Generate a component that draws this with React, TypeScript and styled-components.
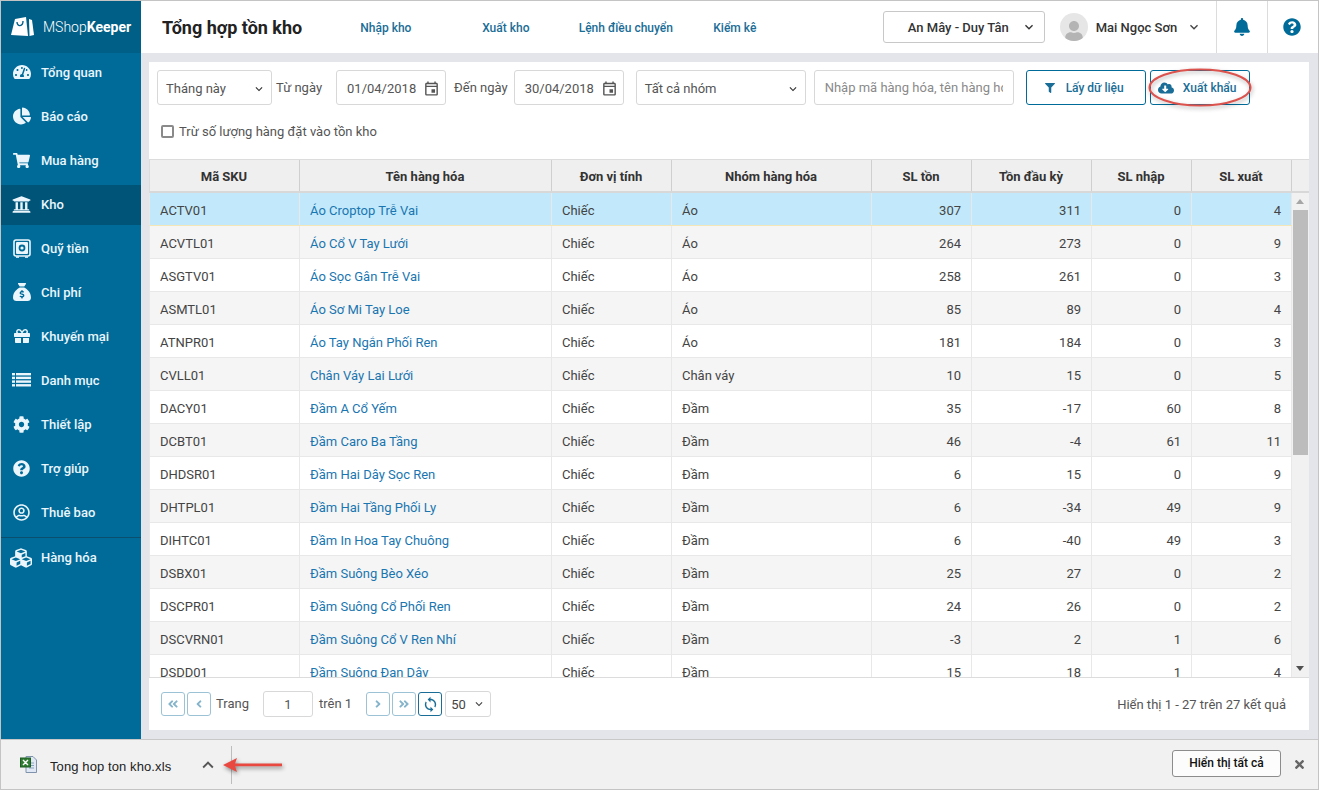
import styled, { createGlobalStyle } from 'styled-components';
import { ReactNode } from 'react';
import {
  FaAngleDoubleLeft,
  FaAngleDoubleRight,
  FaAngleLeft,
  FaAngleRight,
  FaBell,
  FaChartPie,
  FaCloudDownloadAlt,
  FaCog,
  FaCubes,
  FaFilter,
  FaGift,
  FaQuestionCircle,
  FaRegUserCircle,
  FaShoppingCart,
  FaTachometerAlt,
  FaTimes,
  FaUniversity,
  FaUser,
} from 'react-icons/fa';
import { FaSackDollar } from 'react-icons/fa6';
import { MdOutlineEvent, MdKeyboardArrowDown, MdKeyboardArrowUp, MdSync } from 'react-icons/md';

const GlobalStyle = createGlobalStyle`
  html, body {
    margin: 0;
    padding: 0;
    overflow: hidden;
    background: #fff;
  }
  * { box-sizing: border-box; }
  body {
    font-family: Roboto, "Noto Sans", sans-serif;
    font-size: 13px;
    color: #333;
  }
`;

const SafeIcon = () => (
  <svg width="18" height="19" viewBox="0 0 18 19">
    <rect x="1" y="1" width="16" height="16" rx="2" fill="none" stroke="#eaf6fc" strokeWidth="1.6" />
    <rect x="3" y="3" width="12" height="12" rx="1" fill="#eaf6fc" />
    <circle cx="9" cy="9" r="3.4" fill="#006b99" />
    <circle cx="9" cy="9" r="1.6" fill="#eaf6fc" />
    <rect x="3" y="17.4" width="3" height="1.4" fill="#eaf6fc" />
    <rect x="12" y="17.4" width="3" height="1.4" fill="#eaf6fc" />
  </svg>
);

const ListIcon = () => (
  <svg width="19" height="14" viewBox="0 0 19 14" fill="#eaf6fc">
    <rect x="0" y="0" width="3" height="2.4" />
    <rect x="4" y="0" width="15" height="2.4" />
    <rect x="0" y="3.7" width="3" height="2.4" />
    <rect x="4" y="3.7" width="15" height="2.4" />
    <rect x="0" y="7.4" width="3" height="2.4" />
    <rect x="4" y="7.4" width="15" height="2.4" />
    <rect x="0" y="11.1" width="3" height="2.4" />
    <rect x="4" y="11.1" width="15" height="2.4" />
  </svg>
);

const LogoIcon = () => (
  <svg width="23" height="20" viewBox="0 0 23 20">
    <path d="M4 2 L15 0 L17 19 L0 18 Z" fill="#fff" />
    <path d="M18 2 L21 3 L23 18 L18.5 19 Z" fill="#fff" />
    <path d="M6 5 C6 10 12 10 12 4" fill="none" stroke="#00608a" strokeWidth="1.4" />
  </svg>
);

const ExcelIcon = () => (
  <svg width="17" height="17" viewBox="0 0 17 17">
    <path d="M6 0.5 H13 L16.5 4 V16.5 H6 Z" fill="#dfe8f4" stroke="#7f93ad" />
    <path d="M9 7 H14 M9 9.5 H14 M9 12 H14" stroke="#8ba3c2" />
    <rect x="0.5" y="2" width="10" height="9" fill="#2f7d32" stroke="#1d5c22" />
    <path d="M3 4 L8 9 M8 4 L3 9" stroke="#fff" strokeWidth="1.4" />
  </svg>
);

const menuItems: { label: string; icon: ReactNode }[] = [
  { label: 'Tổng quan', icon: <FaTachometerAlt size={18} /> },
  { label: 'Báo cáo', icon: <FaChartPie size={18} /> },
  { label: 'Mua hàng', icon: <FaShoppingCart size={17} /> },
  { label: 'Kho', icon: <FaUniversity size={19} /> },
  { label: 'Quỹ tiền', icon: <SafeIcon /> },
  { label: 'Chi phí', icon: <FaSackDollar size={18} /> },
  { label: 'Khuyến mại', icon: <FaGift size={16} /> },
  { label: 'Danh mục', icon: <ListIcon /> },
  { label: 'Thiết lập', icon: <FaCog size={17} /> },
  { label: 'Trợ giúp', icon: <FaQuestionCircle size={17} /> },
  { label: 'Thuê bao', icon: <FaRegUserCircle size={17} /> },
];

const rows = [
  ['ACTV01', 'Áo Croptop Trễ Vai', 'Áo', 307, 311, 0, 4],
  ['ACVTL01', 'Áo Cổ V Tay Lưới', 'Áo', 264, 273, 0, 9],
  ['ASGTV01', 'Áo Sọc Gân Trễ Vai', 'Áo', 258, 261, 0, 3],
  ['ASMTL01', 'Áo Sơ Mi Tay Loe', 'Áo', 85, 89, 0, 4],
  ['ATNPR01', 'Áo Tay Ngắn Phối Ren', 'Áo', 181, 184, 0, 3],
  ['CVLL01', 'Chân Váy Lai Lưới', 'Chân váy', 10, 15, 0, 5],
  ['DACY01', 'Đầm A Cổ Yếm', 'Đầm', 35, -17, 60, 8],
  ['DCBT01', 'Đầm Caro Ba Tầng', 'Đầm', 46, -4, 61, 11],
  ['DHDSR01', 'Đầm Hai Dây Sọc Ren', 'Đầm', 6, 15, 0, 9],
  ['DHTPL01', 'Đầm Hai Tầng Phối Ly', 'Đầm', 6, -34, 49, 9],
  ['DIHTC01', 'Đầm In Hoa Tay Chuông', 'Đầm', 6, -40, 49, 3],
  ['DSBX01', 'Đầm Suông Bèo Xéo', 'Đầm', 25, 27, 0, 2],
  ['DSCPR01', 'Đầm Suông Cổ Phối Ren', 'Đầm', 24, 26, 0, 2],
  ['DSCVRN01', 'Đầm Suông Cổ V Ren Nhí', 'Đầm', -3, 2, 1, 6],
  ['DSDD01', 'Đầm Suông Đan Dây', 'Đầm', 15, 18, 1, 4],
];

const headers = ['Mã SKU', 'Tên hàng hóa', 'Đơn vị tính', 'Nhóm hàng hóa', 'SL tồn', 'Tồn đầu kỳ', 'SL nhập', 'SL xuất'];

export default function App() {
  return (
    <>
      <GlobalStyle />
      <Page>
        <Main>
          <Sidebar>
            <Logo>
              <LogoIcon />
              <LogoText>
                MShop<b>Keeper</b>
              </LogoText>
            </Logo>
            <Menu>
              {menuItems.map((item) => (
                <MenuItem key={item.label} $active={item.label === 'Kho'}>
                  <MenuIcon>{item.icon}</MenuIcon>
                  {item.label}
                </MenuItem>
              ))}
            </Menu>
            <MenuFooter>
              <MenuIcon $wide>
                <FaCubes size={22} />
              </MenuIcon>
              Hàng hóa
            </MenuFooter>
          </Sidebar>
          <Content>
            <Header>
              <Title>Tổng hợp tồn kho</Title>
              <Tabs>
                <Tab>Nhập kho</Tab>
                <Tab>Xuất kho</Tab>
                <Tab>Lệnh điều chuyển</Tab>
                <Tab>Kiểm kê</Tab>
              </Tabs>
              <StoreSelect>
                An Mây - Duy Tân
                <MdKeyboardArrowDown size={16} />
              </StoreSelect>
              <Avatar>
                <FaUser size={20} />
              </Avatar>
              <UserName>Mai Ngọc Sơn</UserName>
              <UserCaret>
                <MdKeyboardArrowDown size={16} />
              </UserCaret>
              <HeaderAction>
                <FaBell size={18} />
              </HeaderAction>
              <HeaderAction>
                <FaQuestionCircle size={18} />
              </HeaderAction>
            </Header>
            <Body>
              <Panel>
                <Filters>
                  <FilterRow>
                    <Field $width={115}>
                      Tháng này
                      <MdKeyboardArrowDown size={14} />
                    </Field>
                    <FieldLabel $left={4} $right={14}>
                      Từ ngày
                    </FieldLabel>
                    <Field $width={110} $date>
                      01/04/2018
                      <MdOutlineEvent size={17} color="#555" />
                    </Field>
                    <FieldLabel $left={8} $right={6}>
                      Đến ngày
                    </FieldLabel>
                    <Field $width={110} $date>
                      30/04/2018
                      <MdOutlineEvent size={17} color="#555" />
                    </Field>
                    <Field $width={170} $left={12}>
                      Tất cả nhóm
                      <MdKeyboardArrowDown size={14} />
                    </Field>
                    <SearchInput placeholder="Nhập mã hàng hóa, tên hàng hóa" />
                    <ActionButton $left={12} $width={120} $gap={11} $shift={3}>
                      <FaFilter size={10} />
                      Lấy dữ liệu
                    </ActionButton>
                    <ActionButton $left={4} $width={100} $gap={9} $shift={5}>
                      <FaCloudDownloadAlt size={16} />
                      Xuất khẩu
                    </ActionButton>
                  </FilterRow>
                  <CheckRow>
                    <CheckBox />
                    Trừ số lượng hàng đặt vào tồn kho
                  </CheckRow>
                </Filters>
                <TableArea>
                  <TableColumn>
                    <HeadRow>
                      {headers.map((h) => (
                        <HeadCell key={h}>{h}</HeadCell>
                      ))}
                    </HeadRow>
                    <RowsClip>
                      {rows.map((r, i) => (
                        <Row key={r[0]} $selected={i === 0} $alt={i % 2 === 1}>
                          <Cell>{r[0]}</Cell>
                          <LinkCell>{r[1]}</LinkCell>
                          <Cell>Chiếc</Cell>
                          <Cell>{r[2]}</Cell>
                          <NumCell>{r[3]}</NumCell>
                          <NumCell>{r[4]}</NumCell>
                          <NumCell>{r[5]}</NumCell>
                          <NumCell>{r[6]}</NumCell>
                        </Row>
                      ))}
                    </RowsClip>
                  </TableColumn>
                  <Scroller>
                    <ScrollCorner />
                    <ScrollTrack>
                      <ArrowUp />
                      <ScrollThumb />
                      <ArrowDown />
                    </ScrollTrack>
                  </Scroller>
                </TableArea>
                <Pager>
                  <PageButton>
                    <FaAngleDoubleLeft size={12} />
                  </PageButton>
                  <PageButton>
                    <FaAngleLeft size={12} />
                  </PageButton>
                  <PagerText $left={5} $right={14}>
                    Trang
                  </PagerText>
                  <PageInput>1</PageInput>
                  <PagerText $left={6} $right={14}>
                    trên 1
                  </PagerText>
                  <PageButton>
                    <FaAngleRight size={12} />
                  </PageButton>
                  <PageButton>
                    <FaAngleDoubleRight size={12} />
                  </PageButton>
                  <PageButton $strong>
                    <MdSync size={17} />
                  </PageButton>
                  <PageSize>
                    50
                    <MdKeyboardArrowDown size={14} />
                  </PageSize>
                  <PagerResult>Hiển thị 1 - 27 trên 27 kết quả</PagerResult>
                </Pager>
              </Panel>
            </Body>
          </Content>
        </Main>
        <DownloadBar>
          <ExcelIcon />
          <FileName>Tong hop ton kho.xls</FileName>
          <FileCaret>
            <MdKeyboardArrowUp size={22} />
          </FileCaret>
          <BarDivider />
          <ShowAll>Hiển thị tất cả</ShowAll>
          <BarClose>
            <FaTimes size={13} />
          </BarClose>
        </DownloadBar>
        <EllipseNote width="106" height="42" viewBox="0 0 106 42">
          <ellipse cx="53" cy="20.5" rx="50.5" ry="18" fill="none" stroke="#dc524d" strokeWidth="2" />
        </EllipseNote>
        <ArrowNote width="64" height="20" viewBox="0 0 64 20">
          <path d="M2 10 L16 3 L14 8.6 H61 V11.2 H14 L16 17 Z" fill="#e8483f" />
        </ArrowNote>
      </Page>
    </>
  );
}

const Page = styled.div`
  position: relative;
  width: 1319px;
  height: 790px;
  display: flex;
  flex-direction: column;
  overflow: hidden;
  border: 1px solid #c4c4c4;
`;

const Main = styled.div`
  flex: 1;
  min-height: 0;
  display: flex;
`;

const Sidebar = styled.aside`
  width: 140px;
  background: #006b99;
  color: #eaf6fc;
  display: flex;
  flex-direction: column;
`;

const Logo = styled.div`
  height: 52px;
  background: #005f87;
  display: flex;
  align-items: center;
  gap: 9px;
  padding: 0 0 0 10px;
`;

const LogoText = styled.span`
  color: #fff;
  font-size: 14px;
  font-weight: 300;
  white-space: nowrap;
  b {
    font-weight: 700;
  }
`;

const Menu = styled.nav`
  display: flex;
  flex-direction: column;
  gap: 4px;
`;

const MenuItem = styled.div<{ $active?: boolean }>`
  height: 40px;
  display: flex;
  align-items: center;
  padding-bottom: 2px;
  font-size: 13px;
  font-weight: 500;
  background: ${(p) => (p.$active ? '#005478' : 'transparent')};
  color: #eaf6fc;
`;

const MenuIcon = styled.span<{ $wide?: boolean }>`
  width: 40px;
  display: flex;
  justify-content: center;
  padding-left: ${(p) => (p.$wide ? '0' : '1px')};
`;

const MenuFooter = styled.div`
  margin-top: 4px;
  height: 40px;
  border-top: 1px solid #0b4f6e;
  display: flex;
  align-items: center;
  font-size: 13px;
  font-weight: 500;
`;

const Content = styled.div`
  flex: 1;
  min-width: 0;
  display: flex;
  flex-direction: column;
  background: #e3e5ea;
`;

const Header = styled.header`
  height: 52px;
  background: #fff;
  display: flex;
  align-items: center;
  padding-left: 21px;
`;

const Title = styled.h1`
  margin: 0;
  width: 164px;
  font-size: 18px;
  font-weight: 700;
  color: #222;
  white-space: nowrap;
`;

const Tabs = styled.div`
  display: grid;
  grid-template-columns: 120px 120px 120px 98px;
  margin-right: 99px;
  padding-top: 2px;
`;

const Tab = styled.div`
  font-size: 12px;
  font-weight: 500;
  color: #1a6d96;
  text-align: center;
  white-space: nowrap;
`;

const StoreSelect = styled.div`
  width: 162px;
  height: 32px;
  border: 1px solid #c8c8c8;
  border-radius: 3px;
  display: flex;
  align-items: center;
  justify-content: space-between;
  padding: 0 7px 0 24px;
  font-size: 13px;
  font-weight: 500;
  color: #333;
  white-space: nowrap;
`;

const Avatar = styled.div`
  width: 28px;
  height: 28px;
  margin-left: 15px;
  border-radius: 50%;
  background: #e6e6e6;
  color: #b4b4b4;
  display: flex;
  align-items: flex-end;
  justify-content: center;
  overflow: hidden;
`;

const UserName = styled.div`
  margin-left: 8px;
  font-size: 13px;
  font-weight: 500;
  color: #333;
  white-space: nowrap;
`;

const UserCaret = styled.div`
  width: 33px;
  margin-right: 6px;
  display: flex;
  justify-content: center;
  color: #444;
`;

const HeaderAction = styled.div`
  width: 51px;
  height: 52px;
  border-left: 1px solid #dcdcdc;
  color: #006b99;
  display: flex;
  align-items: center;
  justify-content: center;
  &:last-child {
    padding-right: 2px;
  }
`;

const Body = styled.div`
  flex: 1;
  min-height: 0;
  padding: 9px 9px 9px 8px;
`;

const Panel = styled.section`
  height: 668px;
  background: #fff;
  display: flex;
  flex-direction: column;
`;

const Filters = styled.div`
  height: 97px;
  padding: 8px 0 0 8px;
`;

const FilterRow = styled.div`
  display: flex;
  align-items: center;
  height: 35px;
`;

const Field = styled.div<{ $width: number; $left?: number; $date?: boolean }>`
  width: ${(p) => p.$width}px;
  height: 35px;
  margin-left: ${(p) => p.$left ?? 0}px;
  flex: none;
  border: 1px solid #d8d8d8;
  border-radius: 3px;
  display: flex;
  align-items: center;
  justify-content: space-between;
  padding: 2px 5px 0 ${(p) => (p.$date ? 10 : 8)}px;
  font-size: 13px;
  color: #555;
  white-space: nowrap;
  svg {
    color: #333;
  }
`;

const FieldLabel = styled.span<{ $left: number; $right: number }>`
  margin: 0 ${(p) => p.$right}px 0 ${(p) => p.$left}px;
  font-size: 13px;
  color: #555;
  white-space: nowrap;
`;

const SearchInput = styled.input`
  width: 200px;
  height: 35px;
  margin-left: 8px;
  flex: none;
  border: 1px solid #d8d8d8;
  border-radius: 3px;
  padding: 0 10px;
  font: 400 13px Roboto, sans-serif;
  outline: none;
  &::placeholder {
    color: #8a8a8a;
    opacity: 1;
  }
`;

const ActionButton = styled.button<{ $left: number; $width: number; $gap: number; $shift: number }>`
  width: ${(p) => p.$width}px;
  height: 35px;
  margin-left: ${(p) => p.$left}px;
  flex: none;
  background: #fff;
  border: 1px solid #006b99;
  border-radius: 3px;
  color: #1a6d96;
  font: 500 12px Roboto, sans-serif;
  display: flex;
  align-items: center;
  justify-content: center;
  gap: ${(p) => p.$gap}px;
  padding: 0 ${(p) => p.$shift}px 0 0;
`;

const CheckRow = styled.label`
  display: flex;
  align-items: center;
  gap: 5px;
  margin: 17px 0 0 4px;
  height: 18px;
  font-size: 13px;
  color: #555;
`;

const CheckBox = styled.span`
  width: 13px;
  height: 13px;
  border: 2px solid #8a8a8a;
  border-radius: 2px;
`;

const TableArea = styled.div`
  flex: 1;
  min-height: 0;
  display: flex;
  border-bottom: 1px solid #dcdcdc;
`;

const TableColumn = styled.div`
  width: 1143px;
  flex: none;
  display: flex;
  flex-direction: column;
  overflow: hidden;
`;

const columns = '150px 252px 120px 200px 100px 120px 100px 100px';

const HeadRow = styled.div`
  height: 34px;
  flex: none;
  display: grid;
  grid-template-columns: ${columns};
  background: #efefef;
  border-top: 1px solid #dcdcdc;
  border-left: 1px solid #dcdcdc;
  border-bottom: 2px solid #d8d8d8;
`;

const HeadCell = styled.div`
  display: flex;
  align-items: center;
  justify-content: center;
  padding-top: 2px;
  margin-left: -1px;
  border-right: 1px solid #cfcfcf;
  font-size: 13px;
  font-weight: 700;
  color: #333;
`;

const RowsClip = styled.div`
  flex: 1;
  min-height: 0;
  overflow: hidden;
`;

const Row = styled.div<{ $selected?: boolean; $alt?: boolean }>`
  height: 33px;
  display: grid;
  grid-template-columns: ${columns};
  background: ${(p) => (p.$selected ? '#c2e9fb' : p.$alt ? '#f5f5f5' : '#fff')};
  border-left: 1px solid #e8e8e8;
  border-bottom: 1px solid ${(p) => (p.$selected ? '#f5e6b8' : '#e8e8e8')};
`;

const Cell = styled.div`
  display: flex;
  align-items: center;
  padding: 2px 10px 0;
  margin-left: -1px;
  border-right: 1px solid #e8e8e8;
  font-size: 13px;
  color: #444;
  white-space: nowrap;
  padding-left: 11px;
`;

const LinkCell = styled(Cell)`
  color: #1a76b0;
`;

const NumCell = styled(Cell)`
  justify-content: flex-end;
`;

const Scroller = styled.div`
  flex: 1;
  display: flex;
  flex-direction: column;
`;

const ScrollCorner = styled.div`
  height: 34px;
  flex: none;
  background: #efefef;
  border-top: 1px solid #dcdcdc;
  border-bottom: 2px solid #d8d8d8;
`;

const ScrollTrack = styled.div`
  flex: 1;
  position: relative;
  background: #f1f1f1;
  padding: 17px 1px;
`;

const ScrollThumb = styled.div`
  height: 245px;
  background: #bcbcbc;
`;

const ArrowUp = styled.div`
  position: absolute;
  top: 6px;
  left: 4px;
  border: 4px solid transparent;
  border-top: 0;
  border-bottom: 5px solid #a6a6a6;
`;

const ArrowDown = styled.div`
  position: absolute;
  bottom: 6px;
  left: 4px;
  border: 4px solid transparent;
  border-bottom: 0;
  border-top: 5px solid #505050;
`;

const Pager = styled.div`
  height: 52px;
  flex: none;
  display: flex;
  align-items: center;
  gap: 2px;
  padding: 0 23px 0 12px;
`;

const PageButton = styled.div<{ $strong?: boolean }>`
  width: 24px;
  height: 24px;
  flex: none;
  border: 1px solid ${(p) => (p.$strong ? '#1a6d96' : '#9cc3d5')};
  border-radius: 3px;
  color: ${(p) => (p.$strong ? '#1a6d96' : '#85b4cb')};
  display: flex;
  align-items: center;
  justify-content: center;
`;

const PagerText = styled.span<{ $left: number; $right: number }>`
  margin: 0 ${(p) => p.$right - 2}px 2px ${(p) => p.$left - 2}px;
  font-size: 13px;
  color: #555;
  white-space: nowrap;
`;

const PageInput = styled.div`
  width: 50px;
  height: 26px;
  flex: none;
  border: 1px solid #d8d8d8;
  border-radius: 3px;
  display: flex;
  align-items: center;
  justify-content: center;
  font-size: 13px;
  color: #555;
`;

const PageSize = styled.div`
  width: 46px;
  height: 26px;
  flex: none;
  margin-left: 1px;
  border: 1px solid #d8d8d8;
  border-radius: 3px;
  display: flex;
  align-items: center;
  justify-content: space-between;
  padding: 0 4px 0 5px;
  font-size: 13px;
  color: #444;
`;

const PagerResult = styled.span`
  margin-left: auto;
  font-size: 13px;
  color: #555;
  white-space: nowrap;
`;

const DownloadBar = styled.footer`
  height: 50px;
  flex: none;
  background: #f1f1f1;
  border-top: 1px solid #c8c8c8;
  display: flex;
  align-items: center;
  padding: 0 1px 0 19px;
`;

const FileName = styled.span`
  margin-left: 13px;
  padding-top: 3px;
  width: 147px;
  font: 400 13px "Liberation Sans", Arial, sans-serif;
  letter-spacing: 0.1px;
  color: #222;
  white-space: nowrap;
`;

const FileCaret = styled.div`
  width: 22px;
  color: #555;
  display: flex;
  justify-content: center;
`;

const BarDivider = styled.div`
  width: 1px;
  height: 38px;
  margin-left: 12px;
  background: #bdbdbd;
`;

const ShowAll = styled.div`
  margin: 0 0 3px auto;
  width: 109px;
  height: 27px;
  background: #fcfcfc;
  border: 1px solid #8c8c8c;
  border-radius: 3px;
  display: flex;
  align-items: center;
  justify-content: center;
  font-size: 12px;
  font-weight: 500;
  color: #111;
`;

const BarClose = styled.div`
  width: 36px;
  color: #666;
  display: flex;
  justify-content: center;
`;

const EllipseNote = styled.svg`
  position: absolute;
  left: 1146px;
  top: 66px;
  filter: drop-shadow(1px 2px 2px rgba(0, 0, 0, 0.3));
`;

const ArrowNote = styled.svg`
  position: absolute;
  left: 220px;
  top: 754px;
  filter: drop-shadow(1px 2px 2px rgba(0, 0, 0, 0.45));
`;
